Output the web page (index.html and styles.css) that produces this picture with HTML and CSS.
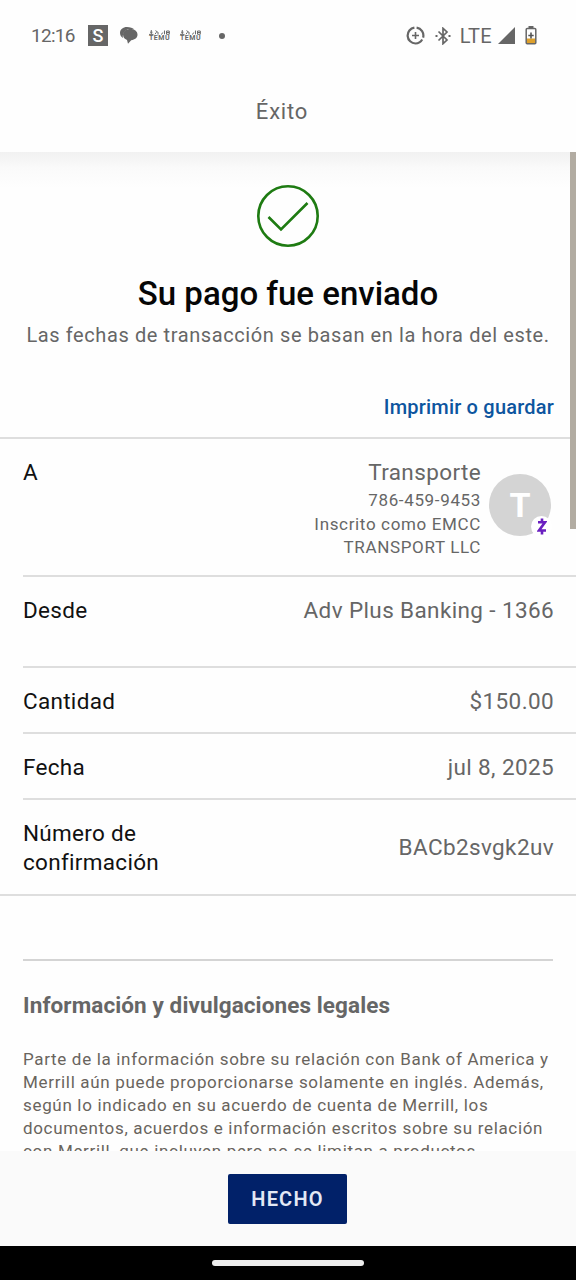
FILE: index.html
```html
<!DOCTYPE html>
<html lang="es">
<head>
    <meta charset="UTF-8">
    <meta name="viewport" content="width=device-width, initial-scale=1.0">
    <title>Éxito</title>
    <link rel="stylesheet" href="styles.css">
</head>
<body>
    <div class="screen">
        <div class="status-bar">
            <div class="status-left">
                <span class="clock">12:16</span>
                <span class="app-s">S</span>
                <svg class="chat" width="18" height="17" viewBox="0 0 18 17">
                    <path d="M7 0C3 0 0 2.500 0 6c0 2.300 1.200 4 3 5C2 8 4 3 9 2c2-.3 4 0 5.500.7C13 1 10 0 7 0z" fill="#666"/>
                    <path d="M10.500 2C6.500 2 3 4.100 3 7.600c0 2.700 1.500 4.600 4 5.300L8 16.700l3.200-3.500c3.700-.2 6.300-2.400 6.300-5.600 0-3.300-3-5.600-7-5.600z" fill="#666"/>
                </svg>
                <span class="temu">
                    <svg width="21" height="5" viewBox="0 0 21 5"><path d="M0 4.400h4.500M2.300 0v4M1 2.200h2.500M6.500.6l2.800 2M6 4.200l1.500-2M9 2.400v2.200M12 4.500l2.200-2M15.500.5v3.800M17.500 1h2.800v3.300h-2.800zM17.500 2.500h2.800" fill="none" stroke="#6b6b6b"/></svg>
                    TEMU
                </span>
                <span class="temu">
                    <svg width="21" height="5" viewBox="0 0 21 5"><path d="M0 4.400h4.500M2.300 0v4M1 2.200h2.500M6.500.6l2.800 2M6 4.200l1.500-2M9 2.400v2.200M12 4.500l2.200-2M15.500.5v3.800M17.500 1h2.800v3.300h-2.800zM17.500 2.500h2.800" fill="none" stroke="#6b6b6b"/></svg>
                    TEMU
                </span>
                <span class="dot"></span>
            </div>
            <div class="status-right">
                <svg width="19" height="19" viewBox="0 0 19 19" fill="none" stroke="#666" stroke-width="2.200">
                    <path d="M10.600 1.600a8 8 0 0 1 6.500 10M16.200 13.500a8 8 0 0 1-6.700 4A8 8 0 0 1 8.400 1.600"/>
                    <path d="M9.500 6v7M6 9.500h7" stroke-width="1.600"/>
                </svg>
                <svg class="bluetooth" width="16" height="18" viewBox="0 0 16 18" fill="none" stroke="#666" stroke-width="1.700">
                    <path d="M3.500 4.500l8.500 8.500-4 3.700V1.300l4 3.700-8.500 8.500"/>
                    <path d="M.5 9h2M13.500 9h2" stroke-width="2"/>
                </svg>
                <span class="network">LTE</span>
                <svg class="signal" width="17" height="17" viewBox="0 0 17 17"><path d="M17 0v17H0z" fill="#666"/></svg>
                <svg class="battery" width="12" height="19" viewBox="0 0 12 19">
                    <path d="M3.500 0h5v2h-5z" fill="#666"/>
                    <path d="M1.500 12.500h9V17h-9z" fill="#dda02c"/>
                    <rect x="1.200" y="2.400" width="9.600" height="15.400" rx="1" fill="none" stroke="#666" stroke-width="1.500"/>
                    <path d="M6 6.500v6M3.300 9.500h5.400" stroke="#555" stroke-width="1.600"/>
                </svg>
            </div>
        </div>

        <header class="header">Éxito</header>

        <main class="content">
            <div class="scrollbar"></div>

            <section class="success">
                <svg width="64" height="64" viewBox="0 0 64 64" fill="none" stroke="#1e7b12" stroke-width="2.600">
                    <circle cx="32" cy="32" r="29.700"/>
                    <path d="M12.500 33L25 45.500 51.500 19"/>
                </svg>
                <h1>Su pago fue enviado</h1>
                <p>Las fechas de transacción se basan en la hora del este.</p>
            </section>

            <a class="print-link" href="#">Imprimir o guardar</a>

            <div class="details">
                <div class="row row-to">
                    <span class="label">A</span>
                    <div class="recipient">
                        <div class="recipient-text">
                            <div class="value">Transporte</div>
                            <div class="phone">786-459-9453</div>
                            <div class="registered">Inscrito como EMCC<br>TRANSPORT LLC</div>
                        </div>
                        <div class="avatar">
                            T
                            <span class="badge">
                                <svg width="10" height="17" viewBox="0 0 10 17" fill="none" stroke="#6a1fc0" stroke-width="2.600">
                                    <path d="M1 4.200h7L2 12.500h7M5 .5v3.500M5 12.500v4"/>
                                </svg>
                            </span>
                        </div>
                    </div>
                </div>
                <div class="row row-from">
                    <span class="label">Desde</span>
                    <span class="value">Adv Plus Banking - 1366</span>
                </div>
                <div class="row">
                    <span class="label">Cantidad</span>
                    <span class="value">$150.00</span>
                </div>
                <div class="row">
                    <span class="label">Fecha</span>
                    <span class="value">jul 8, 2025</span>
                </div>
                <div class="row row-confirmation">
                    <span class="label">Número de<br>confirmación</span>
                    <span class="value code">BACb2svgk2uv</span>
                </div>
            </div>

            <section class="legal">
                <h2>Información y divulgaciones legales</h2>
                <p>Parte de la información sobre su relación con Bank of America y<br>
                Merrill aún puede proporcionarse solamente en inglés. Además,<br>
                según lo indicado en su acuerdo de cuenta de Merrill, los<br>
                documentos, acuerdos e información escritos sobre su relación<br>
                con Merrill, que incluyen pero no se limitan a productos</p>
            </section>
        </main>

        <footer class="footer">
            <button>HECHO</button>
        </footer>
        <div class="nav-bar"><span class="nav-handle"></span></div>
    </div>
</body>
</html>
```

FILE: styles.css
```css
* {
    box-sizing: border-box;
}
body {
    margin: 0;
    font-family: Roboto, sans-serif;
    background: #fefefe;
    color: #666;
}
h1, h2, p {
    margin: 0;
}
svg {
    display: block;
}
.screen {
    display: flex;
    flex-direction: column;
    width: 576px;
    height: 1280px;
    overflow: hidden;
}

/* Status bar */
.status-bar {
    display: flex;
    justify-content: space-between;
    height: 71px;
    padding: 0 39px 0 31px;
}
.status-left,
.status-right {
    display: flex;
    align-items: center;
}
.clock {
    width: 57px;
    font-size: 19px;
    letter-spacing: -0.7px;
}
.app-s {
    width: 20px;
    height: 21px;
    background: #666;
    color: #fff;
    font-size: 18px;
    font-weight: 500;
    line-height: 21px;
    text-align: center;
}
.chat {
    margin: 0 11px 0 12px;
}
.temu {
    width: 21px;
    margin-right: 10px;
    font-size: 7px;
    font-weight: 700;
    line-height: 7px;
    letter-spacing: 0.5px;
}
.dot {
    width: 6px;
    height: 6px;
    margin-left: 8px;
    border-radius: 50%;
    background: #666;
}
.bluetooth {
    margin: 0 9px 0 10px;
}
.network {
    font-size: 20px;
    letter-spacing: 0.3px;
}
.signal {
    margin: 0 10px 0 6px;
}

.header {
    height: 81px;
    padding-right: 12px;
    font-size: 22px;
    line-height: 81px;
    letter-spacing: 0.8px;
    text-align: center;
}

/* Scrolling content */
.content {
    position: relative;
    height: 999px;
    overflow: hidden;
    background: linear-gradient(#f1f1f1, #fafafa 16px, #fefefe 36px);
}
.scrollbar {
    position: absolute;
    z-index: 1;
    top: 0;
    right: 0;
    width: 6px;
    height: 377px;
    background: #b2aca2;
}
.success {
    display: flex;
    flex-direction: column;
    align-items: center;
    height: 240px;
    padding-top: 32px;
    text-align: center;
}
.success h1 {
    margin-top: 26px;
    color: #060606;
    font-size: 33px;
    font-weight: 500;
    line-height: 40px;
}
.success p {
    margin-top: 8px;
    font-size: 20px;
    line-height: 26px;
    letter-spacing: 0.6px;
    white-space: nowrap;
}
.print-link {
    display: block;
    height: 46px;
    padding-right: 22px;
    color: #0d559f;
    font-size: 20px;
    font-weight: 500;
    line-height: 30px;
    letter-spacing: 0.2px;
    text-align: right;
    text-decoration: none;
}
.details {
    padding-left: 23px;
    border-top: 2px solid #dedede;
    border-bottom: 2px solid #dedede;
    margin-top: -1px;
}
.row {
    display: flex;
    justify-content: space-between;
    height: 66px;
    padding: 19px 22px 0 0;
    border-bottom: 2px solid #dedede;
    font-size: 22.5px;
    line-height: 29px;
}
.row-to {
    height: 138px;
}
.row-from {
    height: 91px;
}
.row-confirmation {
    height: 94px;
    border-bottom: 0;
}
.label {
    color: #111;
    letter-spacing: 0.3px;
}
.value {
    letter-spacing: 0.38px;
}
.code {
    margin-top: 14px;
}
.recipient {
    display: flex;
    margin-right: 3px;
    text-align: right;
}
.phone,
.registered {
    font-size: 17px;
    line-height: 23px;
    letter-spacing: 0.65px;
}
.phone {
    line-height: 26px;
}
.avatar {
    position: relative;
    width: 62px;
    height: 62px;
    margin: 16px 0 0 8px;
    border-radius: 50%;
    background: #d4d4d4;
    color: #fff;
    font-size: 34px;
    font-weight: 700;
    line-height: 62px;
    text-align: center;
}
.badge {
    position: absolute;
    right: -1px;
    bottom: -1px;
    display: flex;
    align-items: center;
    justify-content: center;
    width: 21px;
    height: 21px;
    border-radius: 50%;
    background: #fff;
}

.legal {
    margin: 63px 23px 0;
    border-top: 2px solid #d4d4d4;
}
.legal h2 {
    margin-top: 29px;
    font-size: 22.5px;
    font-weight: 700;
    line-height: 30px;
    letter-spacing: 0.1px;
}
.legal p {
    margin-top: 28px;
    color: #69645d;
    font-size: 17px;
    line-height: 23px;
    letter-spacing: 0.67px;
    white-space: nowrap;
}

/* Bottom action */
.footer {
    height: 95px;
    padding: 23px 1px 0 0;
    background: #fafafa;
    text-align: center;
}
button {
    width: 119px;
    height: 50px;
    padding: 0;
    border: none;
    border-radius: 2px;
    background: #012169;
    color: #e3e8f5;
    font-family: inherit;
    font-size: 20px;
    font-weight: 600;
    letter-spacing: 1.2px;
}
.nav-bar {
    display: flex;
    justify-content: center;
    align-items: center;
    height: 34px;
    background: #000;
}
.nav-handle {
    width: 152px;
    height: 6px;
    border-radius: 3px;
    background: #eee;
}
```
